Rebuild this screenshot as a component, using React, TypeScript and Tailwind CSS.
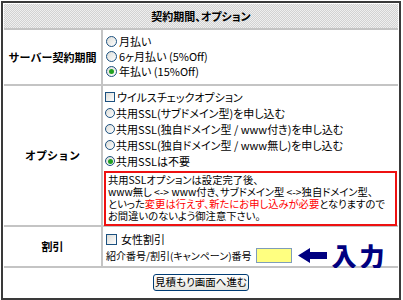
import React from "react";

const Radio = ({ checked = false, small = false }: { checked?: boolean; small?: boolean }) => (
  <span
    className={
      (small ? "w-[10px] h-[10px] " : "w-[11px] h-[11px] ") +
      "inline-flex shrink-0 items-center justify-center rounded-full border border-[#1c5180] bg-linear-to-br from-[#dcdcd7] to-white"
    }
  >
    {checked && <span className="w-[5px] h-[5px] rounded-full bg-[#21a121]" />}
  </span>
);

const Check = ({ small = false }: { small?: boolean }) => (
  <span
    className={
      (small ? "w-[10px] h-[10px] " : "w-[11px] h-[11px] ") +
      "inline-block shrink-0 border border-[#1c5180] bg-linear-to-br from-[#dcdcd7] to-white"
    }
  />
);

export default function App() {
  return (
    <div className="w-[403px] h-[300px] bg-white pt-px pl-px font-['Noto_Sans_CJK_JP','Noto_Sans',sans-serif] text-black text-[11px] [font-feature-settings:'palt']">
      <div className="w-[400px] h-[299px] border-2 border-[#3a3a3a] bg-white p-px">
        <div className="grid grid-cols-[97px_295px] grid-rows-[24px_54px_139px_39px_28px] gap-[2px] bg-[#c4c4c4]">
          {/* header */}
          <div className="col-span-2 flex items-center justify-center [background-image:repeating-conic-gradient(#d2d2d2_0_25%,#efefef_0_50%)] [background-size:2px_2px] text-[11px] font-bold">
            契約期間、オプション
          </div>

          {/* row 1 */}
          <div className="bg-white flex items-center justify-center text-[11px] font-bold [font-feature-settings:normal]">
            サーバー契約期間
          </div>
          <div className="bg-white pl-[3px] pt-[4px] leading-[15px]">
            <div className="flex items-center gap-[2px] h-[15px]">
              <Radio />
              <span>月払い</span>
            </div>
            <div className="flex items-center gap-[2px] h-[15px]">
              <Radio />
              <span>6ヶ月払い (5%Off)</span>
            </div>
            <div className="flex items-center gap-[2px] h-[15px]">
              <Radio checked />
              <span>年払い (15%Off)</span>
            </div>
          </div>

          {/* row 2 */}
          <div className="bg-white flex items-center justify-center text-[11px] font-bold [font-feature-settings:normal]">
            オプション
          </div>
          <div className="bg-white pl-px pt-[3px] leading-[16px]">
            <div className="pl-px">
              <div className="flex items-center gap-[2px] h-[16px]">
                <Check small />
                <span>ウイルスチェックオプション</span>
              </div>
              <div className="flex items-center gap-px h-[16px]">
                <Radio small />
                <span>共用SSL(サブドメイン型)を申し込む</span>
              </div>
              <div className="flex items-center gap-px h-[16px]">
                <Radio small />
                <span>共用SSL(独自ドメイン型 / www付き)を申し込む</span>
              </div>
              <div className="flex items-center gap-px h-[16px]">
                <Radio small />
                <span>共用SSL(独自ドメイン型 / www無し)を申し込む</span>
              </div>
              <div className="flex items-center gap-px h-[16px]">
                <Radio small checked />
                <span>共用SSLは不要</span>
              </div>
            </div>
            <div className="mt-[2px] mr-px border-2 border-[#ee1111] px-[2px] pt-px pb-[2px] text-[10.3px] leading-[12px] whitespace-nowrap">
              <div className="h-[12px]">共用SSLオプションは設定完了後、</div>
              <div className="h-[12px]">www無し &lt;-&gt; www付き、サブドメイン型 &lt;-&gt;独自ドメイン型、</div>
              <div className="h-[12px]">
                といった<span className="text-[#ff0000]">変更は行えず、新たにお申し込みが必要</span>となりますので
              </div>
              <div className="h-[12px]">お間違いのないよう御注意下さい。</div>
            </div>
          </div>

          {/* row 3 */}
          <div className="bg-white flex items-center justify-center text-[11px] font-bold [font-feature-settings:normal]">
            割引
          </div>
          <div className="bg-white pl-[3px] pt-[4px]">
            <div className="flex items-center gap-[4px] h-[16px]">
              <Check />
              <span className="text-[11px]">女性割引</span>
            </div>
            <div className="flex items-center h-[17px] whitespace-nowrap">
              <span className="text-[10px]">紹介番号/割引(キャンペーン)番号</span>
              <span className="ml-[4px] inline-block w-[36px] h-[15px] border border-[#7f9db9] bg-[#ffff80]" />
              <svg className="ml-[6px]" width="29" height="15" viewBox="0 0 29 15">
                <polygon points="0,7.5 12,0 12,4 29,4 29,11 12,11 12,15" fill="#000080" />
              </svg>
              <span className="ml-[5px] text-[25px] font-black leading-none text-[#000080] [font-feature-settings:normal] tracking-[3px]">
                入力
              </span>
            </div>
          </div>

          {/* row 4 */}
          <div className="col-span-2 bg-white flex items-center justify-center">
            <button className="h-[17px] w-[96px] whitespace-nowrap rounded-[3px] border border-[#003c74] bg-linear-to-b from-white to-[#e6e6e0] text-[10.5px] leading-none text-black">
              見積もり画面へ進む
            </button>
          </div>
        </div>
      </div>
    </div>
  );
}
